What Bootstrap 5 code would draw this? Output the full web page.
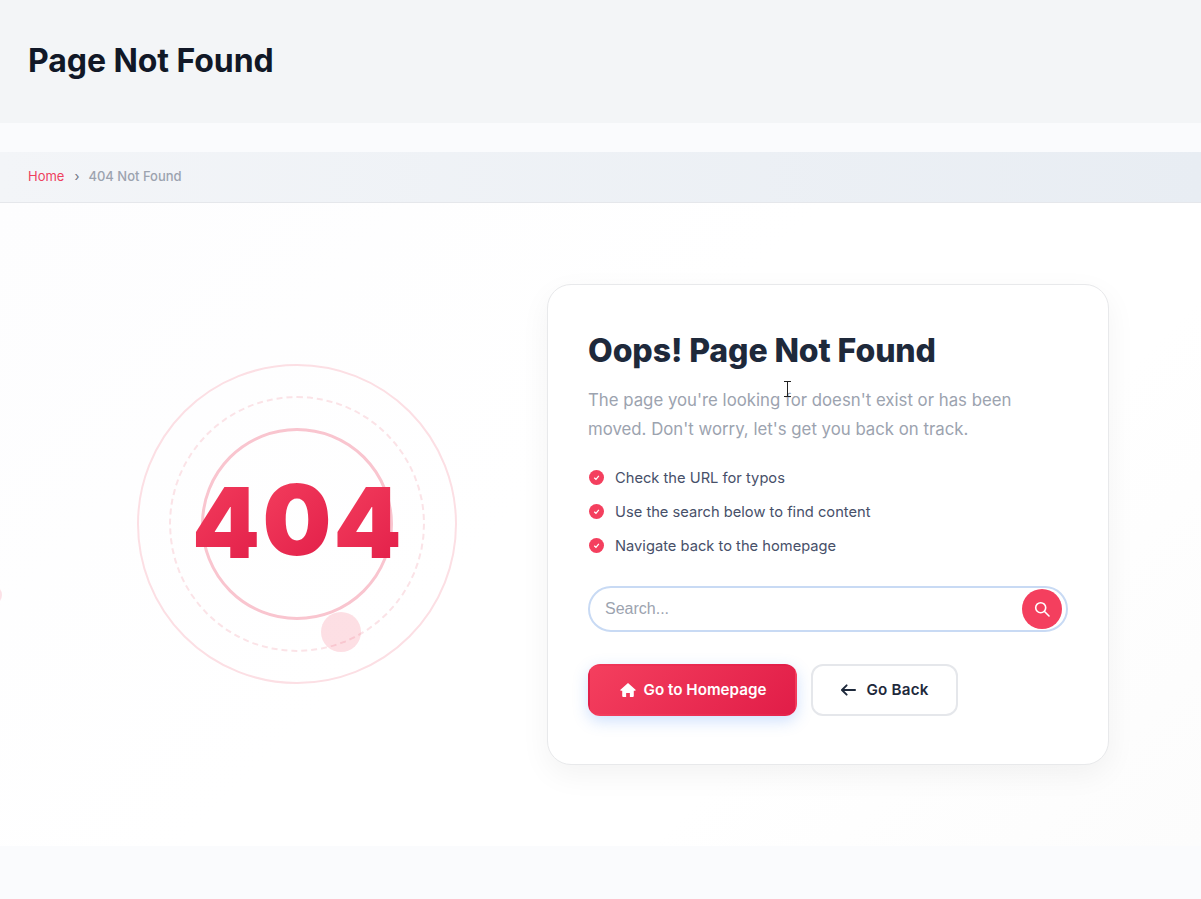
<!DOCTYPE html>
<html lang="en">
<head>
<meta charset="utf-8">
<title>Page Not Found</title>
<link rel="stylesheet" href="https://cdn.jsdelivr.net/npm/bootstrap@5.3.0/dist/css/bootstrap.min.css">
<style>
html,body{height:899px;overflow:hidden}
body{background:#fafbfd;font-family:Inter,"Liberation Sans",sans-serif;color:#1e293b}
.top-band{height:123px;background:#f3f5f7;padding:0 28px}
.top-band h1{font-size:32px;font-weight:700;color:#111827;margin:0;line-height:1.2;letter-spacing:-.07px}
.crumb-band{margin-top:29px;height:51px;padding:0 28px;background:linear-gradient(90deg,#f3f5f8,#e8edf3);border-bottom:1px solid #e5e7eb;font-size:13px}
.crumb-band a{color:#ee3f5e;text-decoration:none}
.crumb-sep{color:#6b7280;margin:0 9px 0 10px;font-size:13px}
.crumb-now{color:#9ca3af;font-weight:500}
.stage{height:643px;padding-left:46px;background:linear-gradient(135deg,#fdfdfe 0%,#fff 45%,#fff 70%,#fcfcfc 100%);position:relative;overflow:hidden}
.art-col{width:501px;flex:none;margin-bottom:1px}
.art{width:320px;height:320px}
.ring-a,.ring-b,.ring-c{border-radius:50%}
.ring-a{width:320px;height:320px;border:2px solid #fcdfe4}
.ring-b{width:256px;height:256px;border:2px dashed #fbe3e7}
.ring-c{width:192px;height:192px;border:3px solid #f9c5cf}
.ring-dot{position:absolute;width:40px;height:40px;border-radius:50%;background:rgba(244,63,94,.17);left:184px;top:248px}
.edge-dot{position:absolute;left:-18px;top:382px;width:20px;height:20px;border-radius:50%;background:rgba(244,63,94,.15)}
.big-num{position:absolute;inset:0;font-size:97px;font-weight:900;line-height:1;letter-spacing:2.2px;padding:0 0 4px 3px}
.big-num span{display:inline-block;background:linear-gradient(135deg,#f43f5e,#e11d48);-webkit-background-clip:text;background-clip:text;color:transparent}
.big-num .lift{transform:translateY(-3px)}
.panel{width:562px;height:481px;padding:44px 40px 40px;background:#fff;border:1px solid #e8e9eb;border-radius:24px;box-shadow:0 10px 30px rgba(0,0,0,.05)}
.panel h2{font-size:32px;font-weight:800;color:#1e293b;line-height:1.4;margin:0 0 12px;letter-spacing:-.1px}
.panel p{font-size:16.8px;line-height:29px;color:#9ca3af;margin:0 0 17px}
.tips{font-size:14.7px;color:#475069;margin:0 0 23px}
.tips li{height:34px}
.tick{width:15px;height:15px;border-radius:50%;background:#f43f5e;margin-right:11px;margin-left:1px}
.finder{height:46px;border:2px solid #c8daf4;border-radius:23px;padding:0 4px 0 13px;margin-bottom:32px}
.finder input{border:0;outline:0;background:none;font-family:"Liberation Sans",sans-serif;font-size:16px;min-width:0}
.finder input::placeholder{color:#9ca3af;opacity:1}
.find-btn{width:40px;height:40px;border:0;border-radius:50%;background:#f43f5e;padding:0}
.go-row{gap:14px}
.go-btn{height:52px;border-radius:12px;font-size:15.2px;font-weight:600;padding:1px 0 0}
.go-main{width:209px;color:#fff;border:2px solid transparent;background:linear-gradient(135deg,#f43f5e,#e11d48);box-shadow:0 5px 15px rgba(59,130,246,.25);padding-left:1px}
.go-alt{width:147px;color:#1e293b;background:#fff;border:2px solid #e5e7eb;letter-spacing:.2px;padding-left:1px}
.go-alt svg{margin-right:10px}
.ibeam{position:absolute;left:784px;top:178px}
</style>
</head>
<body>
<header class="top-band d-flex align-items-center"><h1>Page Not Found</h1></header>
<nav class="crumb-band d-flex align-items-center">
<a href="#">Home</a><span class="crumb-sep">›</span><span class="crumb-now">404 Not Found</span>
</nav>
<main class="stage d-flex align-items-center">
<div class="edge-dot"></div>
<div class="art-col d-flex justify-content-center">
<div class="art position-relative d-flex align-items-center justify-content-center">
<div class="ring-a position-absolute"></div>
<div class="ring-b position-absolute"></div>
<div class="ring-c position-absolute"></div>
<div class="ring-dot"></div>
<div class="big-num d-flex align-items-center justify-content-center"><span>4</span><span class="lift">0</span><span>4</span></div>
</div>
</div>
<section class="panel">
<h2>Oops! Page Not Found</h2>
<p>The page you're looking for doesn't exist or has been moved. Don't worry, let's get you back on track.</p>
<ul class="tips list-unstyled">
<li class="d-flex align-items-center"><span class="tick d-flex align-items-center justify-content-center"><svg width="9" height="9" viewBox="0 0 10 10"><path d="M2.5 5.2 4.4 7 7.6 3.2" fill="none" stroke="#fff" stroke-width="1.4"/></svg></span>Check the URL for typos</li>
<li class="d-flex align-items-center"><span class="tick d-flex align-items-center justify-content-center"><svg width="9" height="9" viewBox="0 0 10 10"><path d="M2.5 5.2 4.4 7 7.6 3.2" fill="none" stroke="#fff" stroke-width="1.4"/></svg></span>Use the search below to find content</li>
<li class="d-flex align-items-center"><span class="tick d-flex align-items-center justify-content-center"><svg width="9" height="9" viewBox="0 0 10 10"><path d="M2.5 5.2 4.4 7 7.6 3.2" fill="none" stroke="#fff" stroke-width="1.4"/></svg></span>Navigate back to the homepage</li>
</ul>
<form class="finder d-flex align-items-center" onsubmit="return false">
<input class="flex-grow-1" type="text" placeholder="Search...">
<button class="find-btn d-flex align-items-center justify-content-center" type="button" aria-label="Search"><svg width="16" height="16" viewBox="0 0 16 16" fill="none" stroke="#fff" stroke-width="1.6" stroke-linecap="round"><circle cx="6.7" cy="6.7" r="5"/><path d="M10.500 10.500 15 15"/></svg></button>
</form>
<div class="d-flex go-row">
<a href="#" class="btn go-btn go-main d-flex align-items-center justify-content-center"><svg class="me-2" width="16" height="14" viewBox="0 0 17 15" fill="#fff"><path d="M8.500 0 .4 7.200c-.4.4-.1 1 .4 1H2.300V14c0 .6.400 1 1 1h3.200v-4.200h4V15h3.200c.6 0 1-.4 1-1V8.200h1.500c.5 0 .8-.6.400-1z"/></svg>Go to Homepage</a>
<a href="#" class="btn go-btn go-alt d-flex align-items-center justify-content-center"><svg width="15" height="12" viewBox="0 0 16 12" fill="none" stroke="#1e293b" stroke-width="2" stroke-linecap="round" stroke-linejoin="round"><path d="M15 6H1.500M6 1 1 6l5 5"/></svg>Go Back</a>
</div>
</section>
<svg class="ibeam" width="7" height="16" viewBox="0 0 7 16" fill="none" stroke="#222" stroke-width="1"><path d="M0 .5h7M0 15.500h7M3.500 .5v15"/></svg>
</main>
</body>
</html>
